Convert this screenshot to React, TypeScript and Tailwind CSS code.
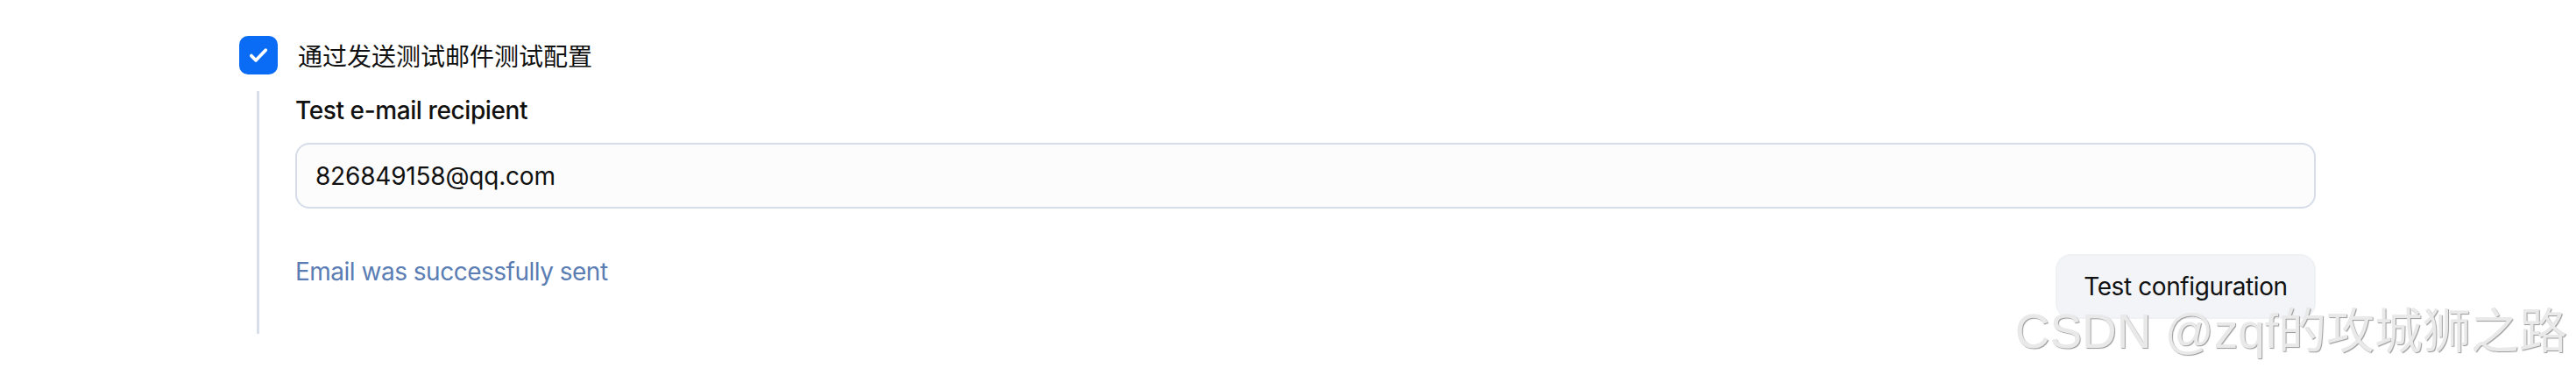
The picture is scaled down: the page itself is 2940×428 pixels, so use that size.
import { useState } from 'react';

const sans = 'font-["Inter","Noto_Sans_CJK_SC",sans-serif]';

function CheckIcon() {
    return (
        <svg viewBox="0 0 24 24" className="h-[28px] w-[28px]" fill="none">
            <path
                d="M5 12.5l4.5 4.5L19 7"
                stroke="white"
                strokeWidth="3.2"
                strokeLinecap="round"
                strokeLinejoin="round"
            />
        </svg>
    );
}

export default function App() {
    const [enabled, setEnabled] = useState(true);
    const [recipient, setRecipient] = useState('826849158@qq.com');

    return (
        <div
            className={`relative h-[428px] w-[2940px] overflow-hidden bg-white pl-[273px] pt-[41px] ${sans}`}
        >
            <label className="flex h-[44px] cursor-pointer items-center gap-[23px]">
                <button
                    type="button"
                    onClick={() => setEnabled(!enabled)}
                    className="flex h-[44px] w-[44px] items-center justify-center rounded-[10px] bg-[#0a6cf5]"
                >
                    {enabled && <CheckIcon />}
                </button>
                <span className="text-[28px] leading-[40px] text-[#111] font-['Noto_Sans_CJK_SC',sans-serif]">
                    通过发送测试邮件测试配置
                </span>
            </label>

            <div className="ml-[20px] mt-[19px] w-[2350px] border-l-[3px] border-[#d9dfea] pb-[17px] pl-[41px]">
                <div className="pt-[2px] text-[28px] font-medium leading-[40px] tracking-[-0.4px] text-[#111]">
                    Test e-mail recipient
                </div>

                <input
                    value={recipient}
                    onChange={(e) => setRecipient(e.target.value)}
                    className="mt-[17px] h-[75px] w-full rounded-[16px] border-2 border-[#d6dce8] bg-[#fcfcfd] px-[21px] text-[28px] tracking-[-0.2px] text-[#111] outline-none"
                />

                <div className="mt-[52px] flex items-start justify-between">
                    <span className="text-[28px] leading-[40px] tracking-[-0.5px] text-[#5a7db3]">
                        Email was successfully sent
                    </span>
                    <button
                        type="button"
                        className="flex h-[74px] w-[297px] items-center justify-center rounded-[18px] border-2 border-[#eff1f5] bg-[#f3f4f8] text-[28px] tracking-[-0.4px] text-[#111]"
                    >
                        Test configuration
                    </button>
                </div>
            </div>

            <div className="pointer-events-none absolute right-[10px] top-[351px] whitespace-nowrap text-[55px] leading-none text-[#e9e9e9] font-['Liberation_Sans','Noto_Sans_CJK_SC',sans-serif] [text-shadow:1px_1px_1px_#9a9a9a]">
                CSDN @zqf的攻城狮之路
            </div>
        </div>
    );
}
